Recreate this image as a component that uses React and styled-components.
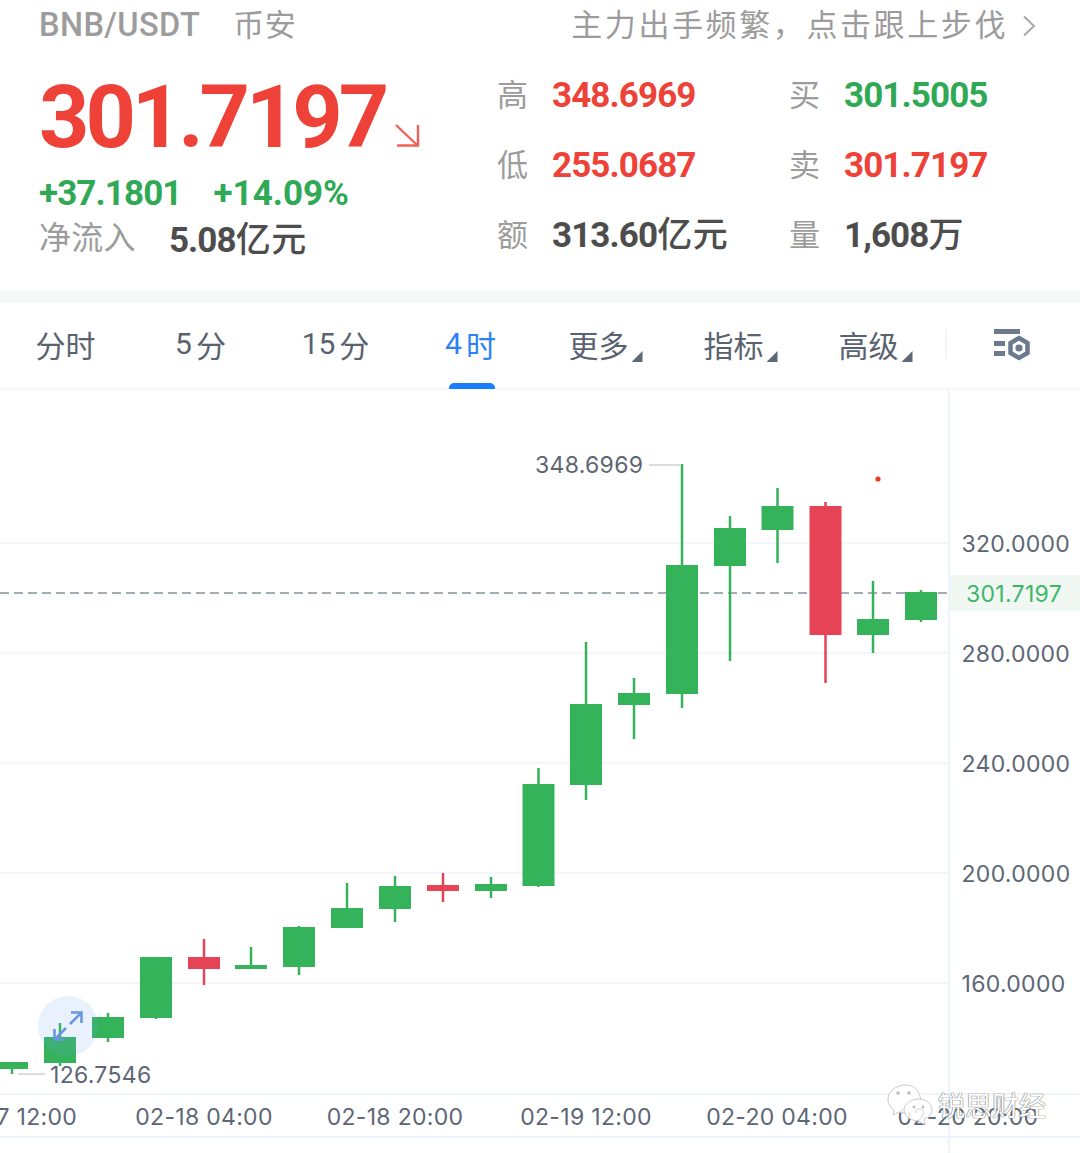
import React from 'react'
import styled, { createGlobalStyle } from 'styled-components'

const Global = createGlobalStyle`
  html, body { margin: 0; padding: 0; background: #fff; }
  body { font-family: "Noto Sans CJK SC", "Noto Sans", sans-serif; }
`

const RED = '#ee4238'
const GREEN = '#2fa955'
const DARK = '#4d4d4d'
const GREY = '#9c9c9c'
const NUM = 'Roboto, "Noto Sans CJK SC", sans-serif'

const Page = styled.div`
  position: relative;
  width: 1080px;
  height: 1153px;
  overflow: hidden;
  background: #fff;
`
const Header = styled.header`
  height: 290px;
  padding: 0 44px 0 39px;
  box-sizing: border-box;
  display: flex;
  flex-direction: column;
`
const TopRow = styled.div`
  height: 50px;
  display: flex;
  align-items: center;
  justify-content: space-between;
  color: ${GREY};
`
const Pair = styled.div`
  font-family: ${NUM};
  font-weight: 500;
  font-size: 32.5px;
  letter-spacing: 0.4px;
  display: flex;
  align-items: center;
  gap: 33px;
`
const Exchange = styled.span`
  font-family: "Noto Sans CJK SC", sans-serif;
  font-weight: 400;
  font-size: 31px;
  letter-spacing: 0.5px;
  line-height: 44px;
  padding-bottom: 4px;
`
const Promo = styled.div`
  display: flex;
  align-items: center;
  gap: 14px;
  font-size: 31px;
  letter-spacing: 2.6px;
  line-height: 44px;
  padding-bottom: 4px;
`
const Chevron = styled.svg`
  flex: none;
  margin-top: 6px;
`
const Summary = styled.div`
  display: flex;
  margin-top: 10px;
`
const Left = styled.div`
  width: 459px;
  display: flex;
  flex-direction: column;
`
const PriceRow = styled.div`
  display: flex;
  align-items: flex-end;
  height: 100px;
  margin-top: 7px;
`
const Price = styled.div`
  font-family: ${NUM};
  font-weight: 700;
  font-size: 88px;
  line-height: 100px;
  letter-spacing: -4.1px;
  color: ${RED};
`
const PriceArrow = styled.svg`
  flex: none;
  margin: 0 0 19px 9px;
`
const ChangeRow = styled.div`
  display: flex;
  gap: 32px;
  margin-top: 6px;
  font-family: ${NUM};
  font-weight: 700;
  font-size: 35px;
  line-height: 42px;
  letter-spacing: -0.9px;
  color: ${GREEN};
`
const Percent = styled.span`
  letter-spacing: 0;
`
const FlowRow = styled.div`
  display: flex;
  align-items: center;
  gap: 33px;
  margin-top: -2px;
  height: 44px;
`
const FlowLabel = styled.span`
  font-size: 32px;
  line-height: 44px;
  letter-spacing: 0.3px;
  color: ${GREY};
`
const Value = styled.span`
  font-family: ${NUM};
  font-weight: 700;
  font-size: 35px;
  letter-spacing: -0.9px;
  line-height: 44px;
  margin-top: ${p => p.$drop || 2}px;
  color: ${p => p.$color || DARK};
  white-space: nowrap;
`
const Unit = styled.span`
  font-family: "Noto Sans CJK SC", sans-serif;
  font-weight: 500;
  letter-spacing: 0.5px;
  font-size: 35px;
  line-height: 1;
`
const Stats = styled.div`
  display: grid;
  grid-template-columns: 292px 1fr;
  grid-auto-rows: 70px;
`
const Stat = styled.div`
  display: flex;
  align-items: center;
  gap: 24px;
  margin-left: -1px;
`
const StatLabel = styled.span`
  font-size: 31px;
  line-height: 44px;
  padding-bottom: 4px;
  color: ${GREY};
`
const Band = styled.div`
  height: 13px;
  background: #f7f8fa;
`
const Tabs = styled.nav`
  position: relative;
  height: 87px;
  box-sizing: border-box;
  border-bottom: 2px solid #f5f6fb;
  display: flex;
  padding-bottom: 4px;
`
const Tab = styled.div`
  position: relative;
  width: 135px;
  flex: none;
  display: flex;
  align-items: center;
  justify-content: center;
  gap: ${p => (p.$caret ? 3 : 0)}px;
  font-size: 30px;
  font-family: ${NUM};
  color: ${p => (p.$active ? '#2a82f6' : '#5a6270')};
  &:first-child { margin-left: -2px; }
`
const TabGlyph = styled.span`
  font-family: "Noto Sans CJK SC", sans-serif;
  margin-left: ${p => p.$gap || 0}px;
`
const Caret = styled.i`
  width: 11px;
  height: 11px;
  background: #5f6877;
  clip-path: polygon(100% 0, 100% 100%, 0 100%);
  align-self: flex-end;
  margin-bottom: 22px;
`
const Underline = styled.span`
  position: absolute;
  left: 50%;
  bottom: -5px;
  width: 46px;
  margin-left: -22px;
  height: 6px;
  border-radius: 5px 5px 0 0;
  background: #1a7dff;
`
const ToolDivider = styled.span`
  width: 2px;
  height: 30px;
  background: #f5f6fb;
  align-self: center;
  margin-left: 2px;
`
const ToolIcon = styled.svg`
  margin-left: 47px;
  align-self: center;
  flex: none;
`
const ChartSvg = styled.svg`
  display: block;
`
const ExpandBadge = styled.div`
  position: absolute;
  left: 38px;
  top: 996px;
  width: 60px;
  height: 60px;
  border-radius: 50%;
  background: rgba(110, 160, 240, 0.15);
  display: flex;
  align-items: center;
  justify-content: center;
`
const Watermark = styled.div`
  position: absolute;
  left: 887px;
  top: 1084px;
  display: flex;
  align-items: center;
  gap: 3px;
`
const WatermarkText = styled.span`
  font-size: 27px;
  line-height: 40px;
  color: #fff;
  text-shadow: 0 0 1px #777, 0 0 1px #777, 0 0 1px #888;
`

const candles = [
  [12, 1062, 1069, 1062, 1074, 'g'],
  [60, 1037, 1063, 1023, 1066, 'g'],
  [108, 1017, 1038, 1013, 1042, 'g'],
  [156, 957, 1018, 957, 1019, 'g'],
  [204, 957, 969, 939, 985, 'r'],
  [251, 965, 969, 947, 969, 'g'],
  [299, 927, 967, 926, 975, 'g'],
  [347, 908, 928, 883, 928, 'g'],
  [395, 886, 909, 876, 922, 'g'],
  [443, 885, 891, 873, 902, 'r'],
  [491, 884, 891, 877, 898, 'g'],
  [538.5, 784, 886, 768, 887, 'g'],
  [586, 704, 785, 642, 800, 'g'],
  [634, 693, 705, 678, 739, 'g'],
  [682, 565, 694, 464, 708, 'g'],
  [730, 528, 566, 516, 661, 'g'],
  [777.5, 506, 530, 488, 563, 'g'],
  [825.5, 506, 635, 502, 683, 'r'],
  [873, 619, 635, 581, 653, 'g'],
  [921, 592, 620, 590, 622, 'g'],
]

const yAxis = [
  [543, '320.0000'],
  [653, '280.0000'],
  [763, '240.0000'],
  [873, '200.0000'],
  [983, '160.0000'],
]

const xAxis = [
  [12, '02-17 12:00'],
  [204, '02-18 04:00'],
  [395, '02-18 20:00'],
  [586, '02-19 12:00'],
  [777, '02-20 04:00'],
  [968, '02-20 20:00'],
]

const labelFont = 'Inter, Roboto, sans-serif'
const colors = { g: '#34b35a', r: '#e64357' }

const Chart = () => (
  <ChartSvg width="1080" height="763" viewBox="0 390 1080 763">
    {yAxis.map(([y]) => (
      <line key={y} x1="0" x2="950" y1={y} y2={y} stroke="#f3f6fb" strokeWidth="2" />
    ))}
    <line x1="0" x2="1080" y1="1094" y2="1094" stroke="#eef2f9" strokeWidth="2" />
    <line x1="0" x2="1080" y1="1137" y2="1137" stroke="#eef2f9" strokeWidth="2" />
    <line x1="949" x2="949" y1="390" y2="1153" stroke="#eef2fc" strokeWidth="2" />

    <rect x="950" y="575" width="130" height="36" fill="#f1f7f3" />
    <line x1="0" x2="948" y1="593" y2="593" stroke="#a4acba" strokeWidth="2" strokeDasharray="9 5" />

    {candles.map(([x, top, bottom, hi, lo, c]) => (
      <g key={x} fill={colors[c]}>
        <rect x={x - 1.25} y={hi} width="2.5" height={lo - hi} />
        <rect x={x - 16} y={top} width="32" height={bottom - top} />
      </g>
    ))}

    <circle cx="878" cy="479" r="2.6" fill="#f0391c" />
    <line x1="649" x2="681" y1="465" y2="465" stroke="#dcdcdc" strokeWidth="2" />
    <line x1="18" x2="45" y1="1074" y2="1074" stroke="#dcdcdc" strokeWidth="2" />

    <g fontFamily={labelFont} fontSize="23" fill="#5d6675" letterSpacing="0.3">
      <text x="535" y="473">348.6969</text>
      <text x="50" y="1083">126.7546</text>
      {yAxis.map(([y, t]) => (
        <text key={t} x="961.5" y={y + 9}>{t}</text>
      ))}
      {xAxis.map(([x, t]) => (
        <text key={t} x={x} y="1125" textAnchor="middle">{t}</text>
      ))}
    </g>
    <text x="966" y="602" fontFamily={labelFont} fontSize="23" fill="#3cb868" letterSpacing="0.3">301.7197</text>
  </ChartSvg>
)

const tabs = [
  { num: '', text: '分时' },
  { num: '5', text: '分', gap: 4 },
  { num: '15', text: '分', gap: 4 },
  { num: '4', text: '时', gap: 4, active: true },
  { num: '', text: '更多', caret: true },
  { num: '', text: '指标', caret: true },
  { num: '', text: '高级', caret: true },
]

export default function App() {
  return (
    <Page>
      <Global />
      <Header>
        <TopRow>
          <Pair>BNB/USDT<Exchange>币安</Exchange></Pair>
          <Promo>
            主力出手频繁，点击跟上步伐
            <Chevron width="14" height="22" viewBox="0 0 14 22" fill="none" stroke="#a8a8a8" strokeWidth="2">
              <path d="M2 1.5 L12 11 L2 20.5" />
            </Chevron>
          </Promo>
        </TopRow>
        <Summary>
          <Left>
            <PriceRow>
              <Price>301.7197</Price>
              <PriceArrow width="26" height="26" viewBox="0 0 26 26" fill="none" stroke="#f2605a" strokeWidth="2.4">
                <path d="M2 3 L23 23 M24 3 V23.5 H3" />
              </PriceArrow>
            </PriceRow>
            <ChangeRow>
              <span>+37.1801</span>
              <Percent>+14.09%</Percent>
            </ChangeRow>
            <FlowRow>
              <FlowLabel>净流入</FlowLabel>
              <Value $drop={12}>5.08<Unit>亿元</Unit></Value>
            </FlowRow>
          </Left>
          <Stats>
            <Stat><StatLabel>高</StatLabel><Value $color={RED}>348.6969</Value></Stat>
            <Stat><StatLabel>买</StatLabel><Value $color={GREEN}>301.5005</Value></Stat>
            <Stat><StatLabel>低</StatLabel><Value $color={RED}>255.0687</Value></Stat>
            <Stat><StatLabel>卖</StatLabel><Value $color={RED}>301.7197</Value></Stat>
            <Stat><StatLabel>额</StatLabel><Value>313.60<Unit>亿元</Unit></Value></Stat>
            <Stat><StatLabel>量</StatLabel><Value>1,608<Unit>万</Unit></Value></Stat>
          </Stats>
        </Summary>
      </Header>
      <Band />
      <Tabs>
        {tabs.map(t => (
          <Tab key={t.num + t.text} $active={t.active} $caret={t.caret}>
            {t.num}
            <TabGlyph $gap={t.gap}>{t.text}</TabGlyph>
            {t.caret && <Caret />}
            {t.active && <Underline />}
          </Tab>
        ))}
        <ToolDivider />
        <ToolIcon width="38" height="34" viewBox="0 0 38 34">
          <g fill="#6b7a8f">
            <rect x="0" y="2" width="26" height="5" />
            <rect x="0" y="14" width="11" height="5" />
            <rect x="0" y="24" width="11" height="5" />
          </g>
          <path d="M25 11 L33.5 16 V26 L25 31 L16.5 26 V16 Z" fill="none" stroke="#6b7a8f" strokeWidth="4.5" />
          <circle cx="25" cy="21" r="3.6" fill="#6b7a8f" />
        </ToolIcon>
      </Tabs>
      <Chart />
      <ExpandBadge>
        <svg width="30" height="30" viewBox="0 0 30 30" fill="none" stroke="#6a97e0" strokeWidth="2.6">
          <path d="M18 1.500 H28.500 V12 M28.500 1.500 L17 13" />
          <path d="M1.500 18 V28.500 H12 M1.500 28.500 L13 17" />
        </svg>
      </ExpandBadge>
      <Watermark>
        <svg width="48" height="42" viewBox="0 0 48 42" fill="rgba(255,255,255,0.85)" stroke="#c9c9c9" strokeWidth="1">
          <path d="M19 1 C9 1 1 7.500 1 15 C1 20 4 24 7 26 L6 31 L12 28 C14 28.700 16 29 18 29 C24 29 30 26 32 21 C36 16 32 1 19 1 Z" />
          <path d="M32 15 C24 15 17 20 17 26 C17 32 24 37 32 37 L38 41 L37 35 C42 33 45 30 45 26 C45 20 39 15 32 15 Z" />
          <g fill="#bbb" stroke="none">
            <circle cx="11" cy="9" r="1.800" />
            <circle cx="22" cy="9" r="1.800" />
            <circle cx="27" cy="23" r="1.400" />
            <circle cx="36" cy="23" r="1.400" />
          </g>
        </svg>
        <WatermarkText>锐思财经</WatermarkText>
      </Watermark>
    </Page>
  )
}
